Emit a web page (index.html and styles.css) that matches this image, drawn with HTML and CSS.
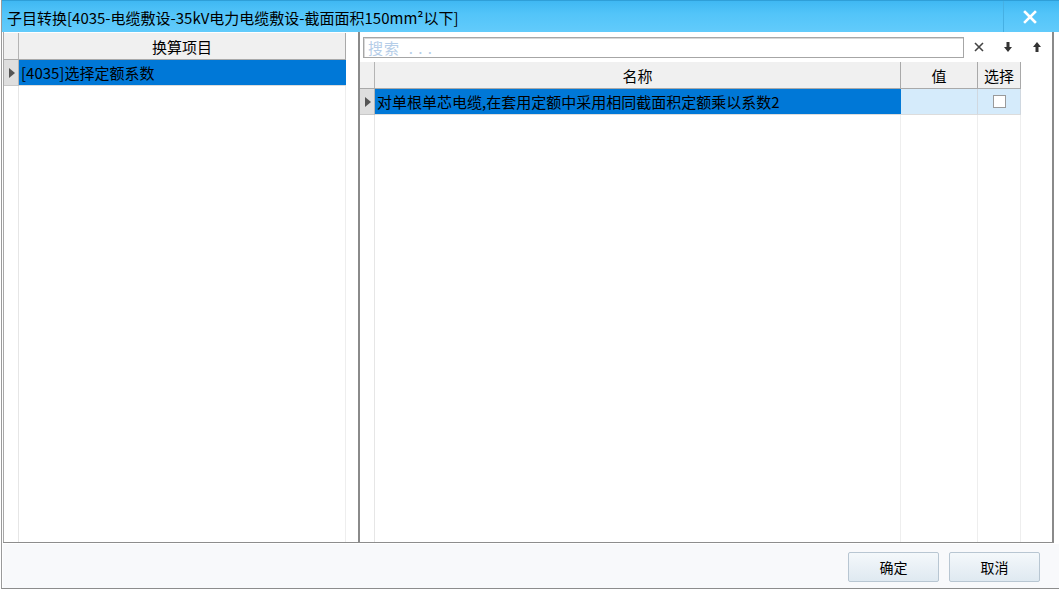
FILE: index.html
```html
<!DOCTYPE html>
<html lang="zh-CN">
<head>
  <meta charset="UTF-8" />
  <title>子目转换</title>
  <link rel="stylesheet" href="styles.css">
</head>
<body>
  <div class="window">
    <div class="titlebar">
      <span class="title">子目转换[4035-电缆敷设-35kV电力电缆敷设-截面面积150mm²以下]</span>
      <div class="close-btn">
        <svg width="14" height="14" viewBox="0 0 14 14"><path d="M2 2 L12 12 M12 2 L2 12" stroke="#fff" stroke-width="2.6" stroke-linecap="square"/></svg>
      </div>
    </div>

    <div class="content">
      <div class="left-panel">
        <div class="grid">
          <div class="row head">
            <div class="ind"></div>
            <div class="cell col-item">换算项目</div>
          </div>
          <div class="row sel">
            <div class="ind"><span class="tri"></span></div>
            <div class="cell col-item text-left">[4035]选择定额系数</div>
          </div>
          <div class="row filler">
            <div class="ind blank"></div>
            <div class="cell col-item"></div>
          </div>
        </div>
      </div>

      <div class="splitter"></div>

      <div class="right-panel">
        <div class="toolbar">
          <div class="search">搜索&nbsp; . . .</div>
          <div class="tool">
            <svg width="12" height="12" viewBox="0 0 12 12"><path d="M2 2 L10 10 M10 2 L2 10" stroke="#444" stroke-width="1.6"/></svg>
          </div>
          <div class="tool">
            <svg width="10" height="12" viewBox="0 0 10 12"><path d="M3.5 1 H6.5 V6 H9 L5 11 L1 6 H3.5 Z" fill="#333"/></svg>
          </div>
          <div class="tool">
            <svg width="10" height="12" viewBox="0 0 10 12"><path d="M3.5 11 H6.5 V6 H9 L5 1 L1 6 H3.5 Z" fill="#333"/></svg>
          </div>
        </div>
        <div class="grid">
          <div class="row head">
            <div class="ind"></div>
            <div class="cell col-name">名称</div>
            <div class="cell col-val">值</div>
            <div class="cell col-chk">选择</div>
          </div>
          <div class="row sel">
            <div class="ind"><span class="tri"></span></div>
            <div class="cell col-name text-left">对单根单芯电缆,在套用定额中采用相同截面积定额乘以系数2</div>
            <div class="cell col-val light"></div>
            <div class="cell col-chk light"><span class="checkbox"></span></div>
          </div>
          <div class="row filler">
            <div class="ind blank"></div>
            <div class="cell col-name"></div>
            <div class="cell col-val"></div>
            <div class="cell col-chk"></div>
          </div>
        </div>
      </div>
    </div>

    <div class="footer">
      <button class="btn">确定</button>
      <button class="btn">取消</button>
    </div>
  </div>
</body>
</html>
```

FILE: styles.css
```css
body {
  margin: 0;
  font-family: "Noto Sans CJK SC", "Noto Sans", sans-serif;
  font-size: 15px;
  color: #000;
  background: #fff;
  overflow: hidden;
}

.window {
  width: 1058px;
  height: 588px;
  border-left: 1px solid #9a9a9a;
  border-bottom: 1px solid #8c8c8c;
  margin-left: 1px;
  display: flex;
  flex-direction: column;
  background: #fff;
}

.titlebar {
  height: 32px;
  display: flex;
  align-items: center;
  justify-content: space-between;
  background: linear-gradient(to bottom, #3fb8f3, #52c4f9 40%, #62cbfb);
  border-top: 1px solid #2f9fd8;
  box-sizing: border-box;
  flex-shrink: 0;
}

.title {
  padding-left: 5px;
  padding-top: 3px;
  font-size: 15px;
  line-height: 20px;
  white-space: nowrap;
}

.close-btn {
  width: 52px;
  height: 31px;
  display: flex;
  align-items: center;
  justify-content: center;
  border-left: 1px solid #46b0e3;
  margin-right: 4px;
}

.content {
  flex: 1;
  display: flex;
  border-bottom: 1px solid #8d8d8d;
  margin-left: 1px;
  margin-right: 6px;
  margin-bottom: 1px;
}

.left-panel {
  width: 352px;
  border-left: 1px solid #a8a8a8;
  display: flex;
  flex-direction: column;
}

.splitter {
  width: 2px;
  border-right: 2px solid #8a8a8a;
  background: #fff;
}

.right-panel {
  flex: 1;
  display: flex;
  flex-direction: column;
  border-right: 2px solid #8a8a8a;
}

.grid {
  flex: 1;
  display: flex;
  flex-direction: column;
}

.left-panel .grid {
  margin-right: 10px;
}

.right-panel .grid {
  margin-right: 31px;
}

.row {
  display: flex;
  height: 26px;
  flex-shrink: 0;
}

.row.head {
  height: 27px;
  background: #f0f0f0;
  border-bottom: 1px solid #a9a9a9;
  box-sizing: border-box;
  margin-top: 1px;
}

.row.filler {
  flex: 1;
  height: auto;
}

.ind {
  width: 14px;
  flex-shrink: 0;
  background: #f0f0f0;
  border-right: 1px solid #b4b4b4;
  display: flex;
  align-items: center;
  justify-content: center;
}

.row.sel .ind {
  background: #dedede;
  border-bottom: 1px solid #c8c8c8;
}

.ind.blank {
  background: #fff;
  border-right: 1px solid #e6e6e6;
}

.tri {
  width: 0;
  height: 0;
  border-top: 5px solid transparent;
  border-bottom: 5px solid transparent;
  border-left: 6px solid #555;
  margin-left: 2px;
}

.cell {
  display: flex;
  align-items: center;
  justify-content: center;
  box-sizing: border-box;
  white-space: nowrap;
  overflow: hidden;
}

.row.head .cell {
  border-right: 1px solid #a9a9a9;
}

.row.filler .cell {
  border-right: 1px solid #eeeeee;
}

.col-item {
  flex: 1;
}

.col-name {
  flex: 1;
}

.col-val {
  width: 77px;
  flex-shrink: 0;
}

.col-chk {
  width: 43px;
  flex-shrink: 0;
}

.text-left {
  justify-content: flex-start;
  padding-left: 2px;
}

.row.sel .cell {
  background: #0078d7;
  color: #000;
  border-bottom: 1px solid #dcdcdc;
}

.row.sel .cell.light {
  background: #d5ebfb;
  border-right: 1px solid #d0d8e0;
}

.checkbox {
  width: 11px;
  height: 11px;
  border: 1px solid #9a9a9a;
  background: #fff;
}

.toolbar {
  height: 29px;
  display: flex;
  align-items: center;
  padding-left: 3px;
  flex-shrink: 0;
}

.search {
  width: 595px;
  height: 19px;
  border: 1px solid #a6a6a6;
  box-shadow: inset 1px 1px 0 #d8d8d8;
  color: #b5cde8;
  font-size: 15px;
  line-height: 19px;
  padding-left: 4px;
  margin-top: 2px;
  letter-spacing: 1px;
}

.tool {
  width: 29px;
  height: 20px;
  display: flex;
  align-items: center;
  justify-content: center;
}

.tool:first-of-type {
  margin-left: 4px;
}

.footer {
  height: 44px;
  flex-shrink: 0;
  background: #f8f9fb;
  display: flex;
  justify-content: flex-end;
  align-items: center;
  gap: 10px;
  padding-right: 20px;
  padding-top: 1px;
  box-sizing: border-box;
  margin-left: 1px;
}

.btn {
  width: 91px;
  height: 30px;
  font-family: "Noto Sans CJK SC", sans-serif;
  font-size: 14px;
  color: #000;
  background: linear-gradient(to bottom, #f4f8fb, #dfe9f1);
  border: 1px solid #b8c6d2;
  border-radius: 2px;
}
```
